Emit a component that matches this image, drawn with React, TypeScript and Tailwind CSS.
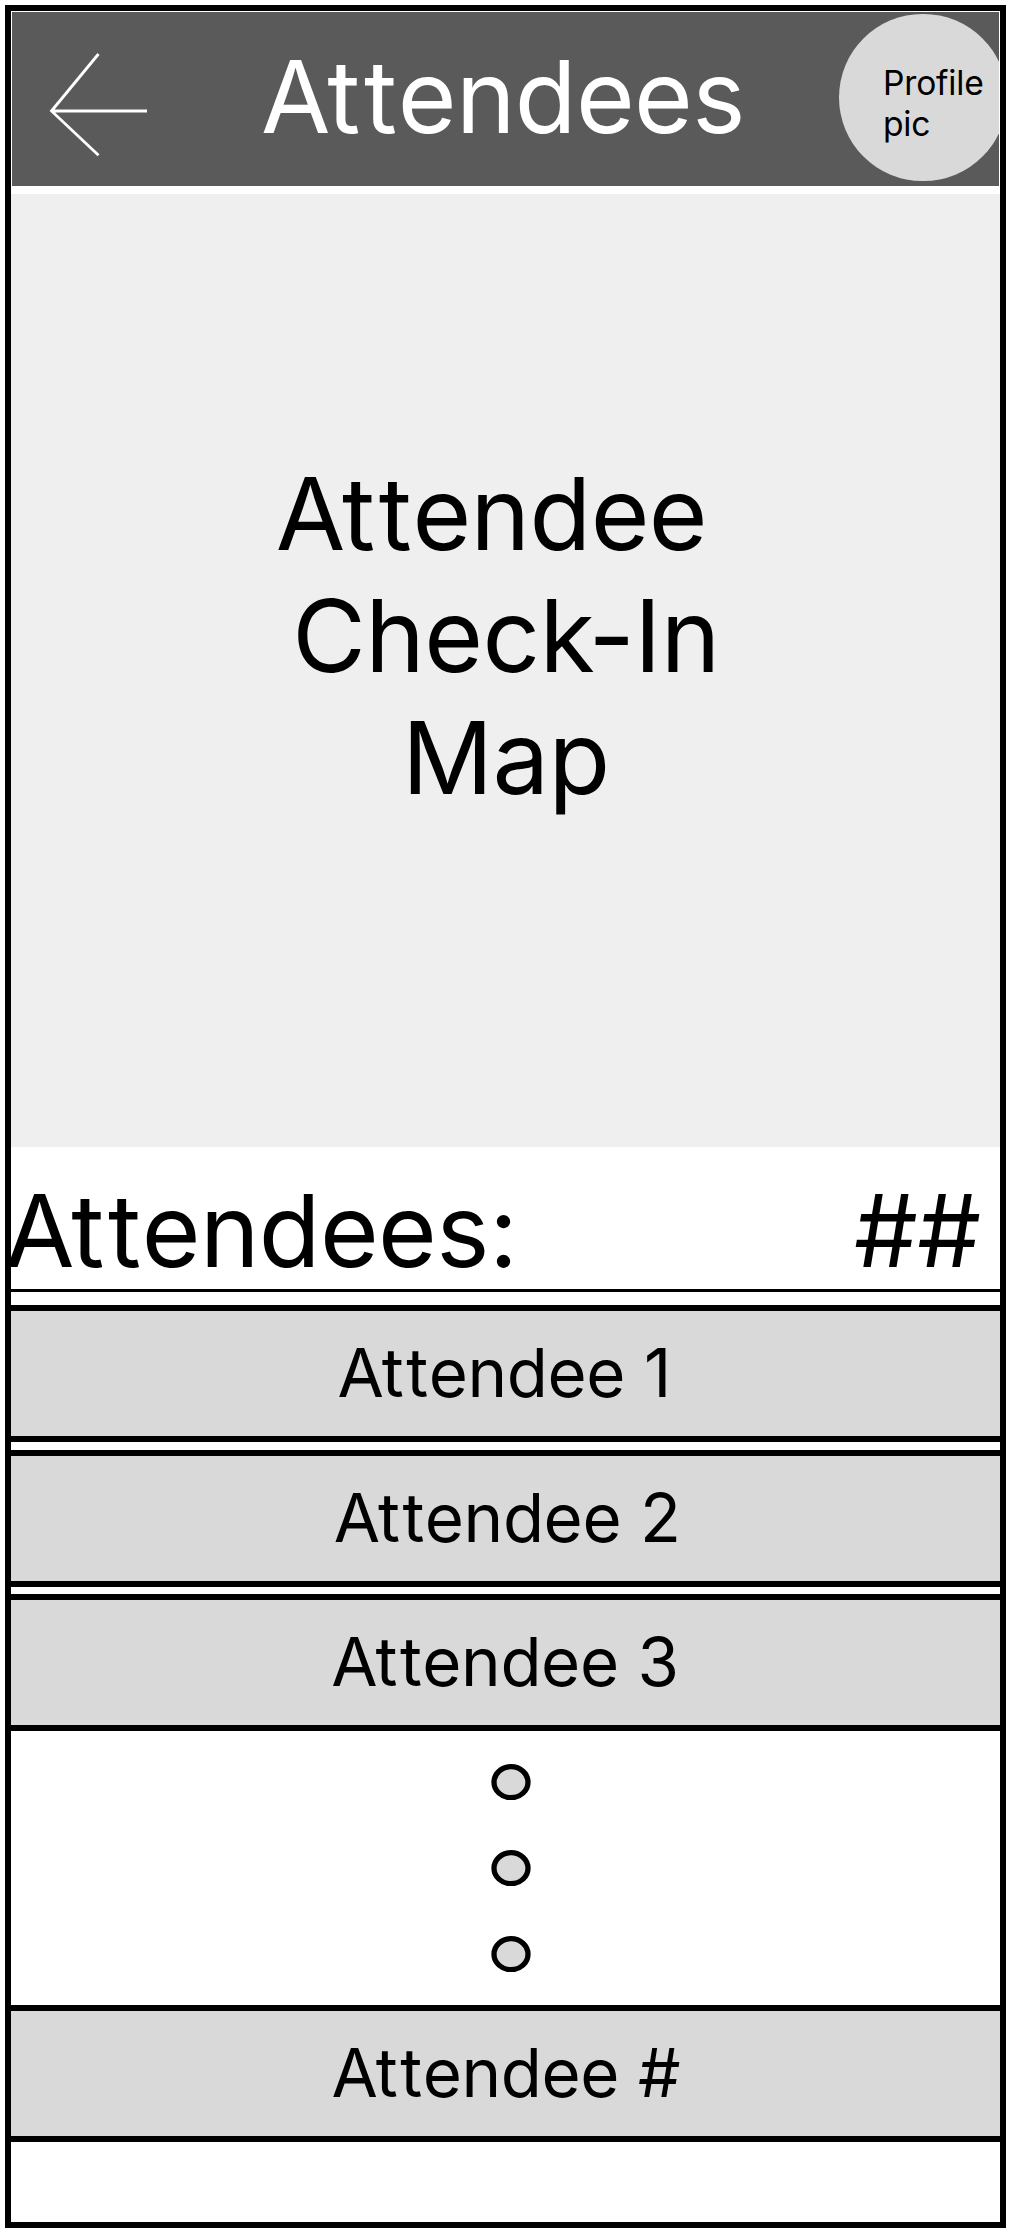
import type { ReactNode } from "react";

/* "Attendee" with the wide double-t spacing used across all headings. */
function AttendeeWord() {
  return (
    <>
      <span className="tracking-[-0.032em]">A</span>
      <span className="tracking-[0.037em]">t</span>
      <span className="tracking-[0.007em]">t</span>
      <span>endee</span>
    </>
  );
}

type AttendeeRowProps = { children: ReactNode; className: string };

function AttendeeRow({ children, className }: AttendeeRowProps) {
  return (
    <div
      className={`h-[137px] shrink-0 border-y-[6px] border-black bg-[#d9d9d9] pt-[21px] text-[67.2px] leading-[81px] whitespace-pre ${className}`}
    >
      <AttendeeWord />
      <span className="tracking-normal"> {children}</span>
    </div>
  );
}

function Dot() {
  return (
    <svg width="40" height="36.4" viewBox="0 0 40 36.4" className="block">
      <ellipse cx="20" cy="18.2" rx="17" ry="15.5" fill="#d9d9d9" stroke="#000" strokeWidth="5.3" />
    </svg>
  );
}

export default function App() {
  return (
    <div className="h-[2234px] w-[1012px] overflow-hidden bg-white pt-[5px] pl-[5px] font-['Inter',sans-serif] text-black [font-kerning:none]">
      <div className="flex h-[2223px] w-[1001px] flex-col border-[6px] border-black">
        <header className="mx-px mt-px flex h-[174px] shrink-0 overflow-hidden bg-[#5a5a5a]">
          <svg
            width="110"
            height="120"
            viewBox="0 0 110 120"
            className="mt-[34px] ml-[28px] shrink-0"
            fill="none"
            stroke="#fff"
            strokeWidth="2.8"
          >
            <path d="M58.5 8 L11.5 65 L58.5 109.3 M11.5 65 H107" />
          </svg>
          <h1 className="mt-[23px] ml-[111px] w-[480px] shrink-0 text-[100.8px] leading-[122px] tracking-[-0.006em] whitespace-nowrap text-white">
            <AttendeeWord />s
          </h1>
          <div className="mt-[1.5px] ml-[98px] h-[167.5px] w-[167.5px] shrink-0 rounded-full bg-[#d9d9d9] pt-[48px] pl-[44px] text-[33.6px] leading-[41.5px] tracking-[-0.006em] [font-kerning:normal]">
            Profile
            <br />
            pic
          </div>
        </header>
        <section className="mt-[8px] h-[953px] shrink-0 bg-[#efefef] pt-[258px] text-[100.8px] leading-[122px] tracking-[-0.006em] whitespace-nowrap">
          <div className="pl-[264.7px]">
            <AttendeeWord />
          </div>
          <div className="pl-[281.3px]">
            Chec<span className="tracking-[-0.063em]">k</span>-In
          </div>
          <div className="pl-[391px]">Map</div>
        </section>
        <section className="flex h-[145px] shrink-0 items-start justify-between border-b-[3px] border-black pt-[22px] pr-[19.5px] text-[100.8px] leading-[122px] tracking-[-0.006em]">
          <span className="-ml-[6px]">
            <AttendeeWord />
            s:
          </span>
          <span>##</span>
        </section>
        <AttendeeRow className="mt-[13px] pl-[326.5px] tracking-[-0.006em]">1</AttendeeRow>
        <AttendeeRow className="mt-[8px] pl-[322.7px] tracking-[-0.006em]">2</AttendeeRow>
        <AttendeeRow className="mt-[7px] pl-[320.2px] tracking-[-0.006em]">3</AttendeeRow>
        <div className="flex h-[274px] shrink-0 flex-col gap-[49.8px] pt-[32.5px] pl-[480px]">
          <Dot />
          <Dot />
          <Dot />
        </div>
        <AttendeeRow className="pl-[320.5px] tracking-[-0.006em]">#</AttendeeRow>
      </div>
    </div>
  );
}
